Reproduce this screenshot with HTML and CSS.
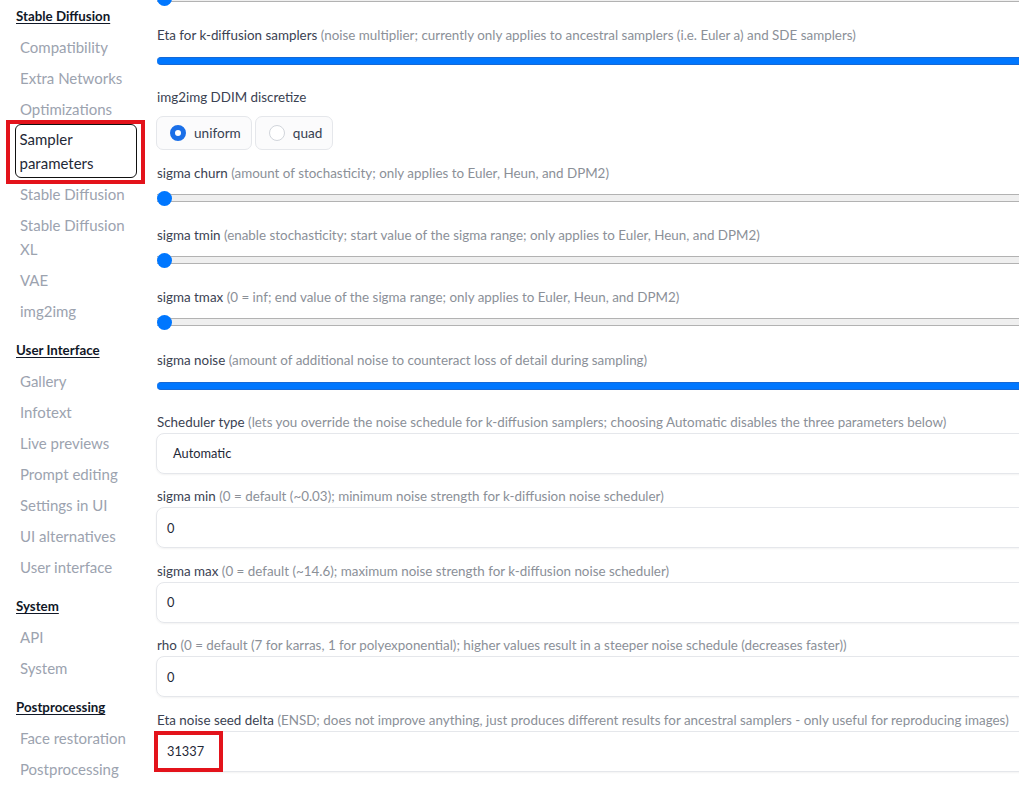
FILE: index.html
```html
<!DOCTYPE html>
<html>
<head>
<meta charset="utf-8">
<link rel="stylesheet" href="styles.css">
</head>
<body>
<div class="page">
  <nav class="sidebar">
    <div class="group-title">Stable Diffusion</div>
    <div class="item">Compatibility</div>
    <div class="item">Extra Networks</div>
    <div class="item">Optimizations</div>
    <div class="item selected">Sampler parameters</div>
    <div class="item">Stable Diffusion</div>
    <div class="item">Stable Diffusion XL</div>
    <div class="item">VAE</div>
    <div class="item">img2img</div>
    <div class="group-title spaced">User Interface</div>
    <div class="item">Gallery</div>
    <div class="item">Infotext</div>
    <div class="item">Live previews</div>
    <div class="item">Prompt editing</div>
    <div class="item">Settings in UI</div>
    <div class="item">UI alternatives</div>
    <div class="item">User interface</div>
    <div class="group-title spaced">System</div>
    <div class="item">API</div>
    <div class="item">System</div>
    <div class="group-title spaced">Postprocessing</div>
    <div class="item">Face restoration</div>
    <div class="item">Postprocessing</div>
  </nav>

  <main class="content">
    <div class="slider top-slider"><div class="track"></div><span class="thumb"></span></div>

    <div class="field slider-field">
      <div class="label">Eta for k-diffusion samplers <span class="hint">(noise multiplier; currently only applies to ancestral samplers (i.e. Euler a) and SDE samplers)</span></div>
      <div class="slider full-slider"><div class="track full"></div></div>
    </div>

    <div class="field radio-field">
      <div class="label">img2img DDIM discretize</div>
      <div class="radios">
        <label class="radio"><span class="dot checked"></span>uniform</label>
        <label class="radio"><span class="dot"></span>quad</label>
      </div>
    </div>

    <div class="field slider-field">
      <div class="label">sigma churn <span class="hint">(amount of stochasticity; only applies to Euler, Heun, and DPM2)</span></div>
      <div class="slider"><div class="track"></div><span class="thumb"></span></div>
    </div>

    <div class="field slider-field">
      <div class="label">sigma tmin <span class="hint">(enable stochasticity; start value of the sigma range; only applies to Euler, Heun, and DPM2)</span></div>
      <div class="slider"><div class="track"></div><span class="thumb"></span></div>
    </div>

    <div class="field slider-field">
      <div class="label">sigma tmax <span class="hint">(0 = inf; end value of the sigma range; only applies to Euler, Heun, and DPM2)</span></div>
      <div class="slider"><div class="track"></div><span class="thumb"></span></div>
    </div>

    <div class="field slider-field">
      <div class="label">sigma noise <span class="hint">(amount of additional noise to counteract loss of detail during sampling)</span></div>
      <div class="slider full-slider"><div class="track full"></div></div>
    </div>

    <div class="field box-field">
      <div class="label">Scheduler type <span class="hint">(lets you override the noise schedule for k-diffusion samplers; choosing Automatic disables the three parameters below)</span></div>
      <div class="box dropdown">Automatic</div>
    </div>

    <div class="field box-field">
      <div class="label">sigma min <span class="hint">(0 = default (~0.03); minimum noise strength for k-diffusion noise scheduler)</span></div>
      <div class="box">0</div>
    </div>

    <div class="field box-field">
      <div class="label">sigma max <span class="hint">(0 = default (~14.6); maximum noise strength for k-diffusion noise scheduler)</span></div>
      <div class="box">0</div>
    </div>

    <div class="field box-field">
      <div class="label">rho <span class="hint">(0 = default (7 for karras, 1 for polyexponential); higher values result in a steeper noise schedule (decreases faster))</span></div>
      <div class="box">0</div>
    </div>

    <div class="field box-field">
      <div class="label">Eta noise seed delta <span class="hint">(ENSD; does not improve anything, just produces different results for ancestral samplers - only useful for reproducing images)</span></div>
      <div class="box marked">31337</div>
    </div>
  </main>
</div>
</body>
</html>
```

FILE: styles.css
```css
html, body {
  margin: 0;
  padding: 0;
  background: #ffffff;
}

body {
  width: 1019px;
  height: 785px;
  overflow: hidden;
  font-family: Lato, "Liberation Sans", sans-serif;
  color: #374151;
}

.page {
  display: flex;
  align-items: flex-start;
}

/* Sidebar */
.sidebar {
  width: 156px;
  flex: none;
  box-sizing: border-box;
  padding-left: 15px;
}

.group-title {
  padding-left: 1px;
  font-size: 13.3px;
  font-weight: 700;
  line-height: 32px;
  height: 31px;
  color: #111827;
  text-decoration: underline;
  text-underline-offset: 2px;
}

.group-title.spaced {
  margin-top: 8px;
}

.item {
  position: relative;
  width: 122px;
  box-sizing: border-box;
  padding: 3.5px 5px;
  font-size: 15px;
  line-height: 24px;
  color: #9ca3af;
}

.item.selected {
  color: #1f2937;
  border: 1.5px solid #111111;
  border-radius: 6px;
  padding: 2px 3.5px;
}

.item.selected::after {
  content: "";
  position: absolute;
  left: -10px;
  right: -9px;
  top: -5px;
  bottom: -7px;
  border: 4px solid #e3131b;
}

/* Main content */
.content {
  width: 960px;
  flex: none;
}

.label {
  padding-left: 1px;
  font-size: 13.4px;
  line-height: 21px;
  height: 20px;
  white-space: nowrap;
  color: #3b4252;
}

.hint {
  color: #8b9098;
}

.slider {
  position: relative;
  height: 30px;
  box-sizing: border-box;
  display: flex;
  align-items: center;
  padding-left: 1px;
}

.full-slider {
  padding-top: 3px;
}

.top-slider {
  margin-top: -17px;
  margin-bottom: 11.5px;
}

.track {
  flex: 1;
  height: 8px;
  box-sizing: border-box;
  border-top: 1px solid #b2b2b2;
  border-bottom: 1px solid #b2b2b2;
  background: #efefef;
}

.track.full {
  background: #0077ff;
  border-color: #1669d6;
  border-radius: 4px 0 0 4px;
}

.thumb {
  position: absolute;
  left: 1px;
  top: 50%;
  width: 15px;
  height: 15px;
  margin-top: -7px;
  border-radius: 50%;
  background: #0077ff;
}

.slider-field {
  margin-bottom: 12.3px;
}

.radio-field {
  margin-bottom: 13px;
}

.radios {
  display: flex;
  gap: 3px;
  margin-top: 9px;
}

.radio {
  display: flex;
  align-items: center;
  gap: 8px;
  height: 34px;
  box-sizing: border-box;
  padding: 0 10px 0 13px;
  border: 1px solid #e5e7eb;
  border-radius: 7px;
  background: #fbfbfc;
  font-size: 13.6px;
  color: #374151;
}

.dot {
  width: 16px;
  height: 16px;
  box-sizing: border-box;
  border-radius: 50%;
  border: 1px solid #d1d5db;
  background: #ffffff;
}

.dot.checked {
  border: 5px solid #1a6fe8;
  background: #ffffff;
}

.box-field {
  margin-bottom: 12.5px;
}

.box {
  position: relative;
  margin-top: 1px;
  height: 41px;
  box-sizing: border-box;
  display: flex;
  align-items: center;
  padding-left: 10px;
  border: 1px solid #e5e7eb;
  border-radius: 8px;
  box-shadow: 0 1px 2px rgba(0, 0, 0, 0.05);
  font-size: 12.8px;
  color: #1f2937;
}

.box.dropdown {
  padding-left: 16px;
}

.box.marked::after {
  content: "";
  position: absolute;
  left: -3px;
  top: -1px;
  width: 69px;
  height: 41px;
  box-sizing: border-box;
  border: 4px solid #e3131b;
}
```
